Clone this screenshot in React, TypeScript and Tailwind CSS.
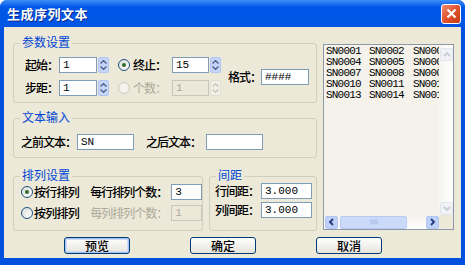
import React from 'react';

const cjk = "font-['Noto_Sans_CJK_SC',sans-serif]";
const mono = "font-['Liberation_Mono',monospace]";

const Field = ({ value, w, disabled }: { value: string; w: string; disabled?: boolean }) => (
  <div
    className={`${w} h-[16px] border pl-[3px] text-[11px] leading-[14px] ${mono} ${
      disabled ? 'border-[#c9c7ba] bg-[#ece9d8] text-[#aca899]' : 'border-[#7f9db9] bg-white text-black'
    }`}
  >
    {value}
  </div>
);

const Spin = ({ disabled }: { disabled?: boolean }) => {
  const c = disabled ? '#c9c7ba' : '#4d6185';
  return (
    <div
      className={`ml-[1px] flex h-[16px] w-[11px] flex-col items-center justify-center gap-[2px] rounded-[2px] border ${
        disabled ? 'border-[#e2e0d6] bg-[#f1efe6]' : 'border-[#b4c7f3] bg-[#c6d6fb]'
      }`}
    >
      <svg width="7" height="4" viewBox="0 0 7 4">
        <path d="M0.5 3.5 L3.5 0.7 L6.5 3.5" stroke={c} fill="none" strokeWidth="1.4" />
      </svg>
      <svg width="7" height="4" viewBox="0 0 7 4">
        <path d="M0.5 0.5 L3.5 3.3 L6.5 0.5" stroke={c} fill="none" strokeWidth="1.4" />
      </svg>
    </div>
  );
};

const Radio = ({ checked, disabled }: { checked?: boolean; disabled?: boolean }) => (
  <div
    className={`flex h-[12px] w-[12px] shrink-0 items-center justify-center rounded-full border ${
      disabled ? 'border-[#cac8bb] bg-[#f4f3ee]' : 'border-[#1c5180] bg-gradient-to-br from-[#dcdcd6] to-white'
    }`}
  >
    {checked && <div className="h-[4px] w-[4px] rounded-full bg-[#2e6b2e]" />}
  </div>
);

const Group = ({ title, className, children }: { title: string; className: string; children: React.ReactNode }) => (
  <div className={`relative rounded-[3px] border border-[#d0d0bf] ${className}`}>
    <span className={`absolute left-[6px] top-[-9px] bg-[#ece9d8] px-[2px] text-[12px] leading-[14px] text-[#0046d5] ${cjk}`}>
      {title}
    </span>
    {children}
  </div>
);

const Label = ({ text, w, dim }: { text: string; w: string; dim?: boolean }) => (
  <span
    className={`${w} shrink-0 whitespace-nowrap text-[12px] leading-[16px] tracking-[-1px] ${cjk} ${
      dim ? 'text-[#aca899]' : 'font-medium text-black'
    }`}
  >
    {text}
  </span>
);

const Btn = ({ text, def }: { text: string; def?: boolean }) => (
  <div
    className={`flex h-[17px] w-[66px] items-center justify-center rounded-[3px] border border-[#003c74] bg-gradient-to-b from-white to-[#e6e4dc] text-[12px] font-medium text-black ${cjk} ${
      def ? 'shadow-[inset_0_0_0_1px_#a7c1f3,inset_0_0_0_2px_#cfdcf7]' : ''
    }`}
  >
    {text}
  </div>
);

const rows = [
  [1, 2, 3],
  [4, 5, 6],
  [7, 8, 9],
  [10, 11, 12],
  [13, 14, 15],
];
const sn = (n: number) => 'SN' + String(n).padStart(4, '0');

const Arrow = ({ dir, faded }: { dir: 'l' | 'r' | 'u' | 'd'; faded?: boolean }) => {
  const d = {
    l: 'M5 1 L2 4 L5 7',
    r: 'M2 1 L5 4 L2 7',
    u: 'M1 5 L4 2 L7 5',
    d: 'M1 2 L4 5 L7 2',
  }[dir];
  return (
    <div
      className={`flex h-[13px] w-[13px] items-center justify-center rounded-[2px] border ${
        faded ? 'border-[#e3e6ef] bg-[#f1f2f6]' : 'border-[#b2c6f2] bg-[#bfd1fa]'
      }`}
    >
      <svg width="8" height="8" viewBox="0 0 8 8">
        <path d={d} stroke={faded ? '#c9cdd8' : '#21397a'} strokeWidth="1.8" fill="none" />
      </svg>
    </div>
  );
};

export default function App() {
  return (
    <div className="flex h-[265px] w-[465px] flex-col overflow-hidden rounded-t-[7px] bg-[#0050e0]">
      {/* title bar */}
      <div className="flex h-[27px] shrink-0 items-center justify-between bg-gradient-to-b from-[#3d8ef7] via-[#0058e8] via-25% to-[#0055e5] pl-[7px] pr-[4px]">
        <span className={`text-[13px] font-bold tracking-[0.5px] text-white [text-shadow:1px_1px_0_#0a2a8a] ${cjk}`}>
          生成序列文本
        </span>
        <div className="flex h-[20px] w-[20px] items-center justify-center rounded-[3px] border border-white bg-gradient-to-br from-[#ef8a6c] via-[#e0532f] to-[#c63a15]">
          <svg width="11" height="11" viewBox="0 0 11 11">
            <path d="M1.5 1.5 L9.5 9.5 M9.5 1.5 L1.5 9.5" stroke="white" strokeWidth="2.2" />
          </svg>
        </div>
      </div>

      {/* client */}
      <div className="mx-[4px] mb-[7px] flex flex-1 flex-col bg-[#ece9d8]">
        <div className="flex pl-[9px] pt-[16px]">
          <div className="flex w-[304px] flex-col">
            <Group title="参数设置" className="flex items-center pb-[6px] pl-[11px] pt-[13px]">
              <div className="flex flex-col gap-[7px]">
                <div className="flex items-center">
                  <Label text="起始：" w="w-[34px]" />
                  <Field value="1" w="w-[38px]" />
                  <Spin />
                </div>
                <div className="flex items-center">
                  <Label text="步距：" w="w-[34px]" />
                  <Field value="1" w="w-[38px]" />
                  <Spin />
                </div>
              </div>
              <div className="ml-[9px] flex flex-col gap-[7px]">
                <div className="flex items-center">
                  <Radio checked />
                  <span className="ml-[3px]" />
                  <Label text="终止：" w="w-[39px]" />
                  <Field value="15" w="w-[37px]" />
                  <Spin />
                </div>
                <div className="flex items-center">
                  <Radio disabled />
                  <span className="ml-[3px]" />
                  <Label text="个数：" w="w-[39px]" dim />
                  <Field value="1" w="w-[37px]" disabled />
                  <Spin disabled />
                </div>
              </div>
              <div className="ml-[7px] flex items-center">
                <Label text="格式：" w="w-[33px]" />
                <Field value="####" w="w-[48px]" />
              </div>
            </Group>

            <Group title="文本输入" className="mt-[15px] flex items-center pb-[7px] pl-[7px] pt-[15px]">
              <Label text="之前文本：" w="w-[56px]" />
              <Field value="SN" w="w-[57px]" />
              <span className="w-[12px]" />
              <Label text="之后文本：" w="w-[60px]" />
              <Field value="" w="w-[57px]" />
            </Group>

            <div className="mt-[18px] flex">
              <Group title="排列设置" className="flex w-[190px] flex-col gap-[3px] pb-[8px] pl-[7px] pt-[6px]">
                <div className="flex items-center">
                  <Radio checked />
                  <span className={`ml-[1px] w-[57px] text-[12px] font-medium tracking-[-0.75px] text-black ${cjk}`}>按行排列</span>
                  <Label text="每行排列个数：" w="w-[81px]" />
                  <Field value="3" w="w-[31px]" />
                </div>
                <div className="flex items-center">
                  <Radio />
                  <span className={`ml-[1px] w-[57px] text-[12px] font-medium tracking-[-0.75px] text-black ${cjk}`}>按列排列</span>
                  <Label text="每列排列个数：" w="w-[81px]" dim />
                  <Field value="1" w="w-[31px]" disabled />
                </div>
              </Group>
              <Group title="间距" className="ml-[6px] flex flex-1 flex-col gap-[3px] pb-[8px] pl-[5px] pt-[6px]">
                <div className="flex items-center">
                  <Label text="行间距：" w="w-[46px]" />
                  <Field value="3.000" w="w-[51px]" />
                </div>
                <div className="flex items-center">
                  <Label text="列间距：" w="w-[46px]" />
                  <Field value="3.000" w="w-[51px]" />
                </div>
              </Group>
            </div>
          </div>

          {/* preview list */}
          <div className="ml-[6px] mt-[1px] flex h-[186px] w-[131px] flex-col border border-[#8d99a8] bg-[#f4f2eb]">
            <div className="flex min-h-0 flex-1">
              <div className={`flex-1 overflow-hidden pl-[2px] pt-[1px] text-[11px] leading-[11px] tracking-[-0.8px] text-black ${mono}`}>
                {rows.map((r, i) => (
                  <div key={i} className="flex whitespace-nowrap">
                    <span className="w-[43px] shrink-0">{sn(r[0])}</span>
                    <span className="w-[44px] shrink-0">{sn(r[1])}</span>
                    <span className="w-[43px] shrink-0">{sn(r[2])}</span>
                  </div>
                ))}
              </div>
              <div className="flex w-[14px] flex-col justify-between bg-gradient-to-r from-[#f6f5f0] to-white pl-[1px] pt-[3px]">
                <Arrow dir="u" faded />
                <Arrow dir="d" faded />
              </div>
            </div>
            <div className="flex h-[14px]">
              <div className="flex flex-1 items-center bg-gradient-to-b from-[#f3f1ea] to-white pl-[1px]">
                <Arrow dir="l" />
                <div className="ml-[2px] flex h-[13px] w-[67px] items-center justify-center rounded-[2px] border border-[#b8cbf2] bg-[#cbdaf9]">
                  <svg width="8" height="6" viewBox="0 0 8 6">
                    <path d="M1 0.5 V5.5 M3 0.5 V5.5 M5 0.5 V5.5 M7 0.5 V5.5" stroke="#a5b9e6" strokeWidth="1" />
                  </svg>
                </div>
                <div className="flex-1" />
                <Arrow dir="r" />
              </div>
              <div className="w-[14px] bg-[#ece9d8]" />
            </div>
          </div>
        </div>

        <div className="mt-[6px] flex gap-[60px] pl-[60px]">
          <Btn text="预览" def />
          <Btn text="确定" />
          <Btn text="取消" />
        </div>
      </div>
    </div>
  );
}
